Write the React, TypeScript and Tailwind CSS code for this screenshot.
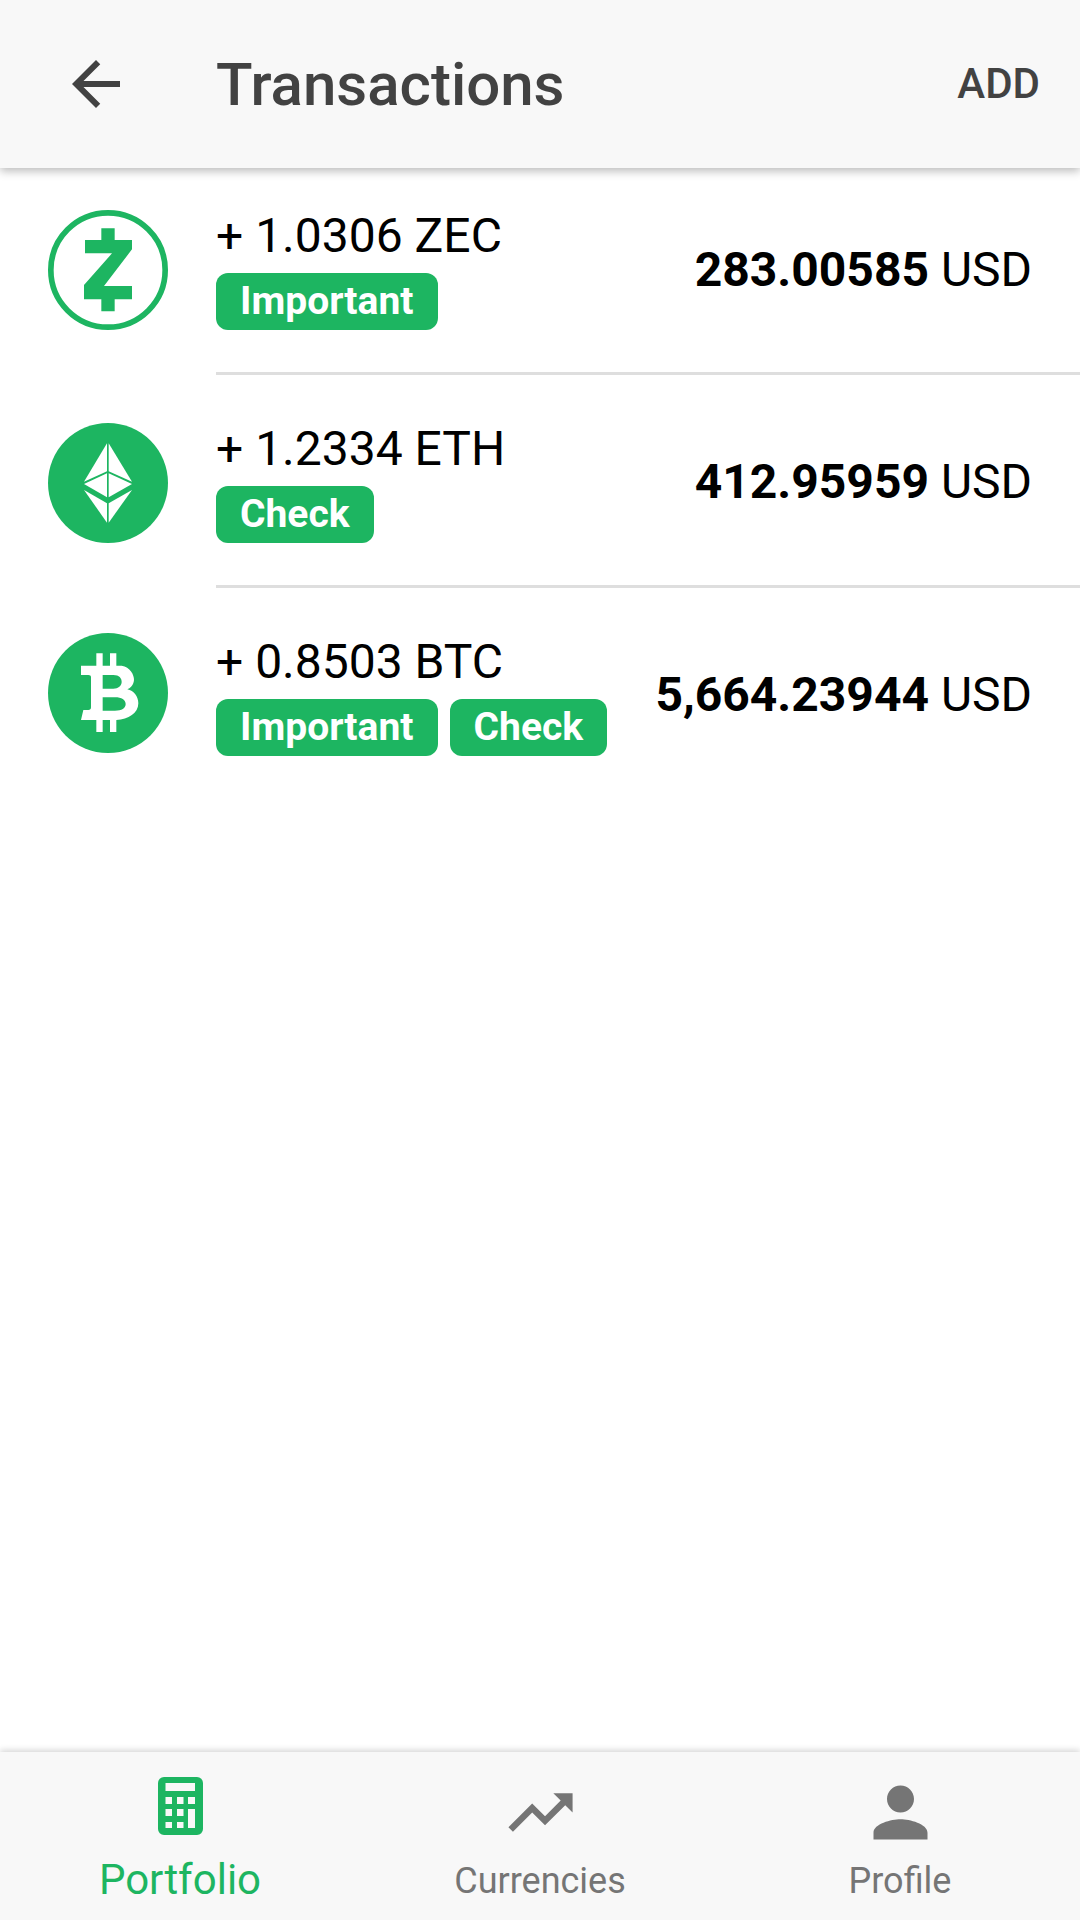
import React from "react";

const GREEN = "#1db561";

function Zec() {
  return (
    <svg viewBox="54 60 360 360" className="w-[120px] h-[120px] block">
      <circle cx="234" cy="240" r="171.5" fill="none" stroke={GREEN} strokeWidth="17" />
      <path
        fill={GREEN}
        d="M214 115H254V150H306V178L222 288H306V328H254V364H214V328H162V285L246 190H165V150H214Z"
      />
    </svg>
  );
}

function Eth() {
  return (
    <svg viewBox="54 39 360 360" className="w-[120px] h-[120px] block">
      <circle cx="234" cy="219" r="180" fill={GREEN} />
      <g fill="#fff">
        <path d="M231 100L162 215L231 184Z" />
        <path d="M236 100L306 215L236 184Z" />
        <path d="M231 190L162 222L231 262Z" />
        <path d="M236 190L306 222L236 262Z" />
        <path d="M162 240L231 280V338Z" />
        <path d="M306 240L236 280V338Z" />
      </g>
    </svg>
  );
}

function Btc() {
  return (
    <svg viewBox="54 39 360 360" className="w-[120px] h-[120px] block">
      <circle cx="234" cy="219" r="180" fill={GREEN} />
      <path
        fill="#fff"
        fillRule="evenodd"
        d="M153 137H199V100H218V137H240V100H259V137H275C300 140 313 165 312 180C311 195 300 205 292 208C312 212 325 230 325 250C325 280 295 298 259 300V336H240V300H218V336H199V300H153L160 270H175Q183 270 183 262V172Q183 165 175 165H153ZM218 165V206H250C265 206 275 197 275 186C275 175 268 165 250 165ZM218 232V272H255C275 272 287 265 287 252C287 240 275 232 255 232Z"
      />
    </svg>
  );
}

function Badge({ children }: { children: React.ReactNode }) {
  return (
    <span className="h-[57px] px-[24px] rounded-[12px] bg-[#1db561] text-white text-[39px] font-bold flex items-center leading-none">
      {children}
    </span>
  );
}

function Row({
  icon,
  amount,
  value,
  tags,
  iconClass,
  colClass,
  textClass,
  valueClass,
}: {
  icon: React.ReactNode;
  amount: string;
  value: string;
  tags: string[];
  iconClass: string;
  colClass: string;
  textClass: string;
  valueClass: string;
}) {
  return (
    <div className="flex">
      <div className="w-[216px] shrink-0 pl-[48px]">
        <div className={iconClass}>{icon}</div>
      </div>
      <div className={`flex-1 flex justify-between pr-[48px] ${colClass}`}>
        <div className={textClass}>
          <div className="text-[48px] leading-[60px] text-black">{amount}</div>
          <div className="flex gap-[12px] mt-[7px]">
            {tags.map((t) => (
              <Badge key={t}>{t}</Badge>
            ))}
          </div>
        </div>
        <div className={`text-[48px] leading-[60px] text-black whitespace-nowrap ${valueClass}`}>
          <span className="font-bold">{value}</span> USD
        </div>
      </div>
    </div>
  );
}

export default function App() {
  return (
    <div className="w-[1080px] h-[1920px] flex flex-col bg-white overflow-hidden font-['Roboto',sans-serif]">
      <header className="relative z-10 h-[168px] shrink-0 bg-[#f8f8f8] flex items-center shadow-[0_3px_9px_rgba(0,0,0,0.28)]">
        <div className="w-[216px] shrink-0 pl-[60px]">
          <svg viewBox="0 0 24 24" className="w-[72px] h-[72px] block fill-[#424242]">
            <path d="M20 11H7.83l5.59-5.59L12 4l-8 8 8 8 1.41-1.41L7.83 13H20v-2z" />
          </svg>
        </div>
        <div className="flex-1 text-[60px] font-medium text-[#424242] leading-none pt-[1px]">Transactions</div>
        <div className="pr-[40px] text-[42px] font-medium text-[#424242] leading-none">ADD</div>
      </header>

      <main className="flex-1">
        <Row
          icon={<Zec />}
          amount="+ 1.0306 ZEC"
          value="283.00585"
          tags={["Important"]}
          iconClass="pt-[42px]"
          colClass="h-[207px] border-b-[3px] border-[#dedede]"
          textClass="pt-[38px]"
          valueClass="pt-[72px]"
        />
        <Row
          icon={<Eth />}
          amount="+ 1.2334 ETH"
          value="412.95959"
          tags={["Check"]}
          iconClass="pt-[48px]"
          colClass="h-[213px] border-b-[3px] border-[#dedede]"
          textClass="pt-[44px]"
          valueClass="pt-[77px]"
        />
        <Row
          icon={<Btc />}
          amount="+ 0.8503 BTC"
          value="5,664.23944"
          tags={["Important", "Check"]}
          iconClass="pt-[45px]"
          colClass="h-[213px]"
          textClass="pt-[44px]"
          valueClass="pt-[77px]"
        />
      </main>

      <nav className="h-[168px] shrink-0 bg-[#f8f8f8] grid grid-cols-3 shadow-[0_-2px_6px_rgba(0,0,0,0.16)]">
        <div className="flex flex-col items-center">
          <svg viewBox="0 0 45 58" className="w-[45px] h-[58px] block mt-[25px]" fill={GREEN} fillRule="evenodd">
            <path d="M6 0H39A6 6 0 0 1 45 6V52A6 6 0 0 1 39 58H6A6 6 0 0 1 0 52V6A6 6 0 0 1 6 0ZM7.5 6V14H37V6ZM7.5 20V27H14V20ZM19 20V27H25.5V20ZM30 20V27H37V20ZM7.5 32V39H14V32ZM19 32V39H25.5V32ZM30 32V51H37V32ZM7.5 45V51H14V45ZM19 45V51H25.5V45Z" />
          </svg>
          <div className="text-[42px] leading-none text-[#1db561] mt-[24px]">Portfolio</div>
        </div>
        <div className="flex flex-col items-center">
          <svg viewBox="0 0 24 24" className="w-[77px] h-[77px] block mt-[22px] fill-[#757575]">
            <path d="M16 6l2.29 2.29-4.88 4.88-4-4L2 16.59 3.41 18l6-6 4 4 6.3-6.29L22 12V6z" />
          </svg>
          <div className="text-[36px] leading-none text-[#757575] mt-[12px]">Currencies</div>
        </div>
        <div className="flex flex-col items-center">
          <svg viewBox="0 0 24 24" className="w-[81px] h-[81px] block mt-[20px] fill-[#757575]">
            <path d="M12 12c2.21 0 4-1.79 4-4s-1.79-4-4-4-4 1.79-4 4 1.79 4 4 4zm0 2c-2.67 0-8 1.34-8 4v2h16v-2c0-2.66-5.33-4-8-4z" />
          </svg>
          <div className="text-[36px] leading-none text-[#757575] mt-[10px]">Profile</div>
        </div>
      </nav>
    </div>
  );
}
